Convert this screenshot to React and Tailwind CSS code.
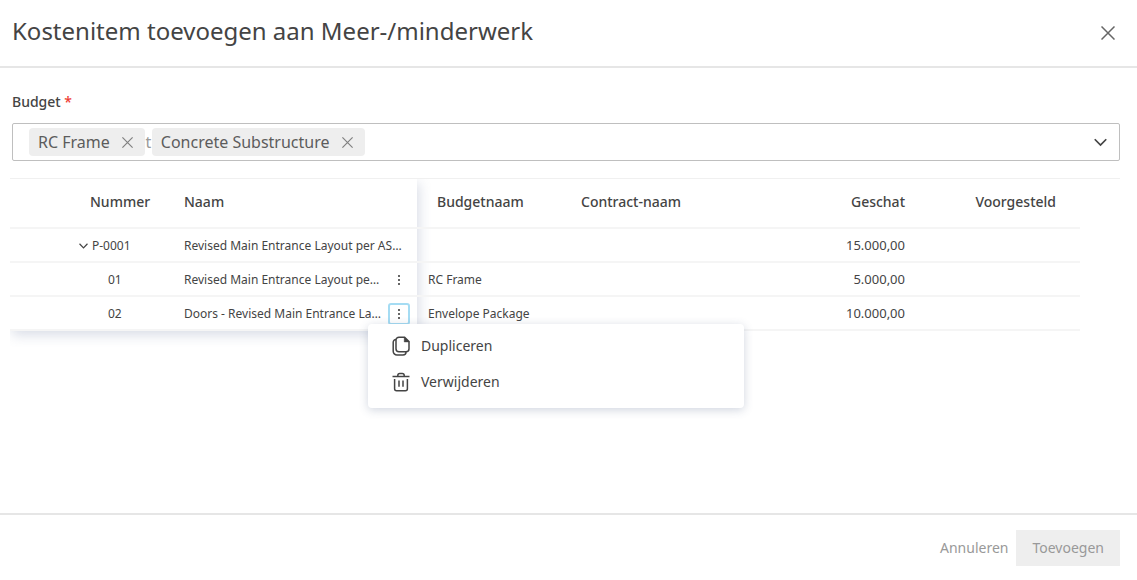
const rows = [
  { number: "P-0001", name: "Revised Main Entrance Layout per AS…", budget: "", estimated: "15.000,00", parent: true },
  { number: "01", name: "Revised Main Entrance Layout pe…", budget: "RC Frame", estimated: "5.000,00" },
  { number: "02", name: "Doors - Revised Main Entrance La…", budget: "Envelope Package", estimated: "10.000,00", open: true },
];

function Cross({ className }) {
  return (
    <svg viewBox="0 0 14 14" className={className} fill="none" stroke="currentColor" aria-hidden="true">
      <path d="M0.5 0.5 13.5 13.5M13.5 0.5 0.5 13.5" strokeWidth="1.5" />
    </svg>
  );
}

function Chevron({ className }) {
  return (
    <svg viewBox="0 0 12 8" className={className} fill="none" stroke="currentColor" aria-hidden="true">
      <path d="M0.7 1 6 6.4 11.3 1" strokeWidth="1.6" />
    </svg>
  );
}

function Dots() {
  return (
    <svg viewBox="0 0 4 12" className="h-3 w-1" fill="currentColor" aria-hidden="true">
      <rect x="1" y="1" width="2" height="2" />
      <rect x="1" y="5" width="2" height="2" />
      <rect x="1" y="9" width="2" height="2" />
    </svg>
  );
}

function CopyIcon() {
  return (
    <svg viewBox="0 0 18 20" className="h-5 w-[18px]" fill="none" stroke="currentColor" strokeWidth="1.5" aria-hidden="true">
      <path d="M7 1.2h5.6L17 5.6v7.2a3 3 0 0 1-3 3H7a3 3 0 0 1-3-3V4.2a3 3 0 0 1 3-3Z" />
      <path d="M12.2 1v5H17.2Z" fill="currentColor" strokeWidth="0.4" />
      <path d="M4 3.4A2.8 2.8 0 0 0 1.2 6.2v9a3.8 3.8 0 0 0 3.8 3.8h6a3 3 0 0 0 3-3" />
    </svg>
  );
}

function TrashIcon() {
  return (
    <svg viewBox="0 0 18 20" className="h-5 w-[18px]" fill="none" stroke="currentColor" strokeWidth="1.5" aria-hidden="true">
      <path d="M0.5 4.5h17" />
      <path d="M5.8 4.2V3.4a2 2 0 0 1 2-2h2.4a2 2 0 0 1 2 2v.8" />
      <path d="M2.6 7v9.8a2 2 0 0 0 2 2h8.8a2 2 0 0 0 2-2V7" />
      <path d="M7 8.4v6.4M11 8.4v6.4" />
    </svg>
  );
}

function Chip({ label }) {
  return (
    <span className="flex h-7 items-center gap-3 rounded bg-[#eeeeee] pr-3 pl-[9px] text-[16px] text-[#5c5c5c]">
      {label}
      <button type="button" aria-label={`${label} wissen`} className="text-[#808080]">
        <Cross className="size-[11px]" />
      </button>
    </span>
  );
}

function RowMenu() {
  return (
    <div
      role="menu"
      className="absolute top-[21px] right-0 z-20 -mr-[334px] flex w-[376px] flex-col rounded bg-white pb-2 pt-1 text-[14px] text-[#444] shadow-[0_2px_10px_rgba(60,80,120,0.24)]"
    >
      <button type="button" role="menuitem" className="flex h-9 items-center gap-[11px] px-6">
        <CopyIcon />
        Dupliceren
      </button>
      <button type="button" role="menuitem" className="flex h-9 items-center gap-[11px] px-6">
        <TrashIcon />
        Verwijderen
      </button>
    </div>
  );
}

export default function App() {
  return (
    <div
      role="dialog"
      aria-labelledby="title"
      className="flex min-h-screen flex-col bg-white font-['Noto_Sans',sans-serif] text-[#444]"
    >
      <header className="flex h-[68px] items-center justify-between border-b-2 border-[#e6e6e6] pr-[22px] pb-1 pl-3">
        <h1 id="title" className="text-[24px]">Kostenitem toevoegen aan Meer-/minderwerk</h1>
        <button type="button" aria-label="Sluiten" className="pt-[3px] text-[#666]">
          <Cross className="size-[14px]" />
        </button>
      </header>

      <main className="flex-1 pt-6">
        <div className="pr-[17px] pl-3">
          <label htmlFor="budget" className="block text-[14px] leading-5 font-medium">
            Budget <span className="text-[#ee3b33]">*</span>
          </label>
          <div className="mt-[11px] flex h-[38px] items-center rounded-xs border border-[#bfbfbf] pr-3 pl-4">
            <Chip label="RC Frame" />
            <span className="w-[7px] text-center text-[16px] text-[#999]">t</span>
            <Chip label="Concrete Substructure" />
            <input id="budget" className="min-w-0 flex-1 outline-none" />
            <button type="button" aria-label="Lijst openen" className="text-[#444]">
              <Chevron className="h-[9px] w-[13px]" />
            </button>
          </div>
        </div>

        <div className="mt-[17px] mr-[17px] ml-[10px] border-t border-[#f0f0f0]">
          <div className="relative mr-10">
            <div className="absolute inset-y-0 left-0 w-[407px] shadow-[2px_4px_12px_rgba(90,110,150,0.24)] [clip-path:inset(0_-14px_-16px_0)]" />
            <table className="relative w-full table-fixed border-collapse text-left text-[12px]">
              <colgroup>
                <col className="w-[172px]" />
                <col className="w-[235px]" />
                <col className="w-[162px]" />
                <col />
                <col className="w-[152px]" />
                <col className="w-[175px]" />
              </colgroup>
              <thead>
                <tr className="h-[49px] border-b-2 border-[#f5f5f5] text-[14px] whitespace-nowrap [&>th]:pb-1 [&>th]:font-medium">
                  <th className="bg-white pl-20">Nummer</th>
                  <th className="bg-white pl-[2px]">Naam</th>
                  <th className="pl-5">Budgetnaam</th>
                  <th className="pl-[2px]">Contract-naam</th>
                  <th className="text-right">Geschat</th>
                  <th className="pr-6 text-right">Voorgesteld</th>
                </tr>
              </thead>
              <tbody>
                {rows.map((row) => (
                  <tr key={row.number} className="h-[34px] border-b-2 border-[#f5f5f5] whitespace-nowrap">
                    <td className="bg-white pt-px">
                      {row.parent ? (
                        <button type="button" aria-expanded="true" className="flex items-center gap-1 pl-[69px]">
                          <Chevron className="h-[6px] w-[9px]" />
                          {row.number}
                        </button>
                      ) : (
                        <span className="pl-[98px]">{row.number}</span>
                      )}
                    </td>
                    <td className="bg-white pt-px pr-[7px] pl-[2px]">
                      <div className="flex items-center justify-between">
                        {row.name}
                        {!row.parent && (
                          <div className="relative">
                            <button
                              type="button"
                              aria-label="Acties"
                              aria-expanded={!!row.open}
                              className={
                                row.open
                                  ? "flex size-[22px] items-center justify-center rounded-[3px] border-2 border-[#a5dcf3] text-[#666]"
                                  : "flex size-[22px] items-center justify-center text-[#666]"
                              }
                            >
                              <Dots />
                            </button>
                            {row.open && <RowMenu />}
                          </div>
                        )}
                      </div>
                    </td>
                    <td className="pt-px pl-[11px]">{row.budget}</td>
                    <td />
                    <td className="pt-[2px] text-right text-[13px]">{row.estimated}</td>
                    <td />
                  </tr>
                ))}
              </tbody>
            </table>
          </div>
        </div>
      </main>

      <footer className="flex h-[67px] items-center justify-end gap-2 border-t-2 border-[#e6e6e6] pr-[17px] text-[14px] text-[#999]">
        <button type="button" className="h-9">Annuleren</button>
        <button type="button" disabled className="h-9 bg-[#eeeeee] px-4">Toevoegen</button>
      </footer>
    </div>
  );
}
